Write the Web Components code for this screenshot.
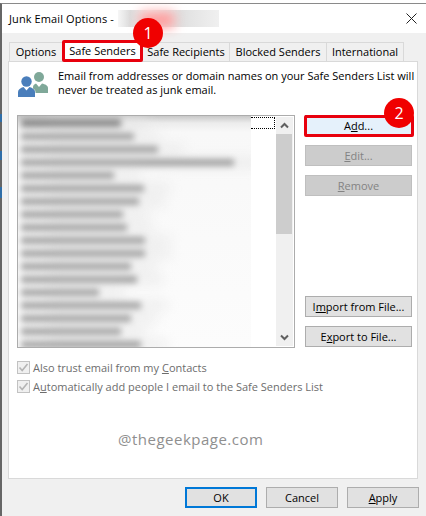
<!DOCTYPE html>
<html>
<head>
<meta charset="utf-8">
<style>
  html, body { margin: 0; padding: 0; background: #fff; }
  body { font: 11px "Open Sans", sans-serif; color: #000; }
</style>
</head>
<body>
<junk-dialog>
  <tab-strip slot="tabs"></tab-strip>
  <sender-list slot="list"></sender-list>
  <dlg-btn slot="side" class="add" key="d">Add...</dlg-btn>
  <dlg-btn slot="side" disabled key="E">Edit...</dlg-btn>
  <dlg-btn slot="side" disabled key="R">Remove</dlg-btn>
  <dlg-btn slot="side" class="imp" key="m">Import from File...</dlg-btn>
  <dlg-btn slot="side" key="x">Export to File...</dlg-btn>
  <check-row slot="checks" key="C">Also trust email from my Contacts</check-row>
  <check-row slot="checks" key="u">Automatically add people I email to the Safe Senders List</check-row>
  <dlg-btn slot="footer" primary>OK</dlg-btn>
  <dlg-btn slot="footer">Cancel</dlg-btn>
  <dlg-btn slot="footer" key="A">Apply</dlg-btn>
</junk-dialog>

<script>
// underline the access key of a label, the way the dialog does
function markKey(text, key) {
  if (!key) return text;
  const i = text.indexOf(key);
  if (i < 0) return text;
  return text.slice(0, i) + '<u>' + key + '</u>' + text.slice(i + 1);
}

class DlgBtn extends HTMLElement {
  connectedCallback() {
    const root = this.attachShadow({ mode: 'open' });
    root.innerHTML = `
      <style>
        :host {
          display: block;
          box-sizing: border-box;
          height: 21px;
          border: 1px solid #adadad;
          background: #e1e1e1;
          font: 11px/19px "Open Sans", sans-serif;
          text-align: center;
          color: #000;
          white-space: nowrap;
        }
        :host([disabled]) { background: #cccccc; border-color: #bfbfbf; color: #838383; }
        :host([primary]) { border: 2px solid #0078d7; line-height: 17px; }
        :host(.add) { background: #e5f1fb; border-color: #0078d7; }
      </style>
      <span>${markKey(this.textContent, this.getAttribute('key'))}</span>`;
  }
}

class CheckRow extends HTMLElement {
  connectedCallback() {
    const root = this.attachShadow({ mode: 'open' });
    root.innerHTML = `
      <style>
        :host {
          display: flex;
          align-items: center;
          gap: 3px;
          height: 19px;
          font: 11px "Open Sans", sans-serif;
          color: #6d6d6d;
          white-space: nowrap;
        }
        svg { flex: none; }
      </style>
      <svg width="13" height="13" viewBox="0 0 13 13">
        <rect x=".5" y=".5" width="12" height="12" fill="#f0f0f0" stroke="#c2c2c2"/>
        <path d="M2.5 6.5 5.2 9.5 10.5 3" fill="none" stroke="#b4b4b4" stroke-width="1.6"/>
      </svg>
      <span>${markKey(this.textContent, this.getAttribute('key'))}</span>`;
  }
}

class TabStrip extends HTMLElement {
  connectedCallback() {
    const tabs = ['Options', 'Safe Senders', 'Safe Recipients', 'Blocked Senders', 'International'];
    const widths = [54, 81, 88, 98, 78];
    const root = this.attachShadow({ mode: 'open' });
    root.innerHTML = `
      <style>
        :host {
          display: flex;
          align-items: flex-end;
          height: 19px;
          padding-left: 2px;
          position: relative;
          z-index: 1;
          font: 11px "Open Sans", sans-serif;
        }
        .tab {
          box-sizing: border-box;
          height: 19px;
          border: 1px solid #d9d9d9;
          border-bottom: 0;
          margin-left: -1px;
          background: #f0f0f0;
          line-height: 18px;
          text-align: center;
          white-space: nowrap;
        }
        .tab.on {
          height: 22px;
          line-height: 15px;
          background: #fff;
          border: 3px solid #e8000d;
          border-radius: 2px;
          margin-bottom: -1px;
          position: relative;
          z-index: 1;
        }
      </style>
      ${tabs.map((t, i) => `<div class="tab${i === 1 ? ' on' : ''}" style="width:${widths[i]}px">${t}</div>`).join('')}`;
  }
}

class SenderList extends HTMLElement {
  connectedCallback() {
    // widths of the blurred addresses, top to bottom
    const rows = [100, 113, 137, 213, 93, 123, 118, 102, 106, 124, 124, 110, 116, 78, 120, 110, 100, 120];
    const root = this.attachShadow({ mode: 'open' });
    root.innerHTML = `
      <style>
        :host {
          display: flex;
          box-sizing: border-box;
          height: 233px;
          border: 1px solid #acacac;
          background: #fff;
          overflow: hidden;
        }
        .names {
          flex: none;
          width: 233px;
          overflow: hidden;
          background: linear-gradient(180deg, #c8c8c8 0, #ececec 7px, #f8f8f8 16px, #fcfcfc 100%);
        }
        .blur {
          display: flex;
          flex-direction: column;
          gap: 6px;
          padding: 3px 0 0 3px;
          filter: blur(3px);
        }
        .blur div { height: 7px; background: #a0a0a0; box-shadow: 26px 0 12px #e6e6e6; }
        .blur div:first-child { background: #858585; height: 8px; }
        .rest { flex: 1; position: relative; }
        .focus { margin: 1px 0 0 0; height: 12px; width: 24px; box-sizing: border-box; border: 1px dotted #000; border-left: 0; }
        .scroll {
          flex: none;
          width: 17px;
          background: #f0f0f0;
          margin: 1px 1px 1px 0;
          display: flex;
          flex-direction: column;
          align-items: stretch;
        }
        .arrow { height: 17px; display: flex; align-items: center; justify-content: center; flex: none; }
        .thumb { height: 100px; background: #cdcdcd; margin-right: 1px; flex: none; }
        .track { flex: 1; }
      </style>
      <div class="names"><div class="blur">${rows.map(w => `<div style="width:${w}px"></div>`).join('')}</div></div>
      <div class="rest"><div class="focus"></div></div>
      <div class="scroll">
        <div class="arrow"><svg width="9" height="7" viewBox="0 0 9 7"><path d="M1 5.5 4.5 2 8 5.5" fill="none" stroke="#606060" stroke-width="2"/></svg></div>
        <div class="thumb"></div>
        <div class="track"></div>
        <div class="arrow"><svg width="9" height="7" viewBox="0 0 9 7"><path d="M1 1.5 4.5 5 8 1.5" fill="none" stroke="#606060" stroke-width="2"/></svg></div>
      </div>`;
  }
}

class JunkDialog extends HTMLElement {
  connectedCallback() {
    const root = this.attachShadow({ mode: 'open' });
    root.innerHTML = `
      <style>
        :host {
          display: block;
          box-sizing: border-box;
          width: 426px;
          height: 516px;
          padding-top: 3px;
          position: relative;
          overflow: hidden;
          font: 11px "Open Sans", sans-serif;
        }
        .win {
          box-sizing: border-box;
          height: 513px;
          border-top: 1px solid #8a8a8a;
          border-left: 2px solid #666;
          background: #f0f0f0;
          display: flex;
          flex-direction: column;
        }
        .title {
          flex: none;
          height: 29px;
          background: #fff;
          display: flex;
          align-items: center;
          padding: 0 9px 0 7px;
          letter-spacing: .1px;
          white-space: nowrap;
        }
        .smudge {
          width: 101px;
          height: 17px;
          margin-left: 4px;
          background: linear-gradient(90deg, #f6f6f6 0, #dcdcdc 12%, #f2f2f2 30%, #e0e0e0 62%, #f0f0f0 100%);
        }
        .close { margin-left: auto; }
        .main { flex: 1; padding: 9px 8px 0 6px; display: flex; flex-direction: column; }
        .panel {
          box-sizing: border-box;
          height: 418px;
          background: #fff;
          border: 1px solid #d9d9d9;
          display: flex;
          flex-direction: column;
          padding: 8px 5px 0 8px;
        }
        .intro { display: flex; gap: 9px; height: 45px; }
        .intro p {
          margin: -1px 0 0;
          line-height: 13.5px;
          white-space: nowrap;
        }
        .work { display: grid; grid-template-columns: 278px 107px; column-gap: 10px; }
        .side { display: flex; flex-direction: column; gap: 9px; }
        .side ::slotted(.imp) { margin-top: 91px; }
        .checks { margin-top: 10px; }
        .footer {
          display: grid;
          grid-template-columns: repeat(3, 72px);
          column-gap: 9px;
          justify-content: end;
          padding-top: 8px;
          margin-right: -1px;
        }
        .mark {
          position: absolute;
          width: 30px;
          height: 30px;
          border-radius: 50%;
          background: #f00000;
          color: #fff;
          font: 16px/30px "Open Sans", sans-serif;
          text-align: center;
          z-index: 3;
        }
        .m1 { left: 133px; top: 18px; }
        .m2 { left: 384px; top: 98px; }
        .glow {
          position: absolute;
          left: 140px; top: 12px;
          width: 34px; height: 16px;
          background: #ff9a9a;
          filter: blur(6px);
          z-index: 2;
        }
        .ring {
          position: absolute;
          left: 304px; top: 115px;
          width: 110px; height: 22px;
          box-sizing: border-box;
          border: 3px solid #e8000d;
          border-radius: 2px;
          z-index: 2;
        }
        .watermark {
          position: absolute;
          left: 118px; top: 429px;
          font: 15px "Open Sans", sans-serif;
          letter-spacing: .5px;
          color: #8f8f8f;
          z-index: 2;
        }
        /* bits of the window behind, showing along the left edge */
        .edge {
          position: absolute;
          left: 0; top: 114px;
          width: 2px; height: 84px;
          background: linear-gradient(180deg,
            #2f6ea8 0 8px, transparent 8px 37px,
            #2f6ea8 37px 46px, transparent 46px 73px,
            #2f6ea8 73px 84px);
        }
      </style>
      <div class="win">
        <div class="title">
          <span>Junk Email Options -</span><div class="smudge"></div>
          <svg class="close" width="11" height="11" viewBox="0 0 11 11"><path d="M.5.5l10 10M10.5.5l-10 10" stroke="#222" stroke-width="1" fill="none"/></svg>
        </div>
        <div class="main">
          <slot name="tabs"></slot>
          <div class="panel">
            <div class="intro">
              <svg width="32" height="27" viewBox="0 0 32 27" style="flex:none">
                <circle cx="22" cy="7" r="5" fill="#7fa899"/>
                <path d="M16 23v-6c0-1.5 1-2.5 3-3.5l3 3.5 3-3.5c3 .8 6 2 6 4.5v5z" fill="#7fa899"/>
                <circle cx="9.5" cy="11.5" r="5.2" fill="#4a7ebb" stroke="#fff" stroke-width="1" paint-order="stroke"/>
                <path d="M1 27v-5c0-2.5 2.5-4 5.5-5l3 3.5 3-3.5c3 1 5.5 2.5 5.5 5v5z" fill="#4a7ebb" stroke="#fff" stroke-width="1" paint-order="stroke"/>
              </svg>
              <p>Email from addresses or domain names on your Safe Senders List will<br>never be treated as junk email.</p>
            </div>
            <div class="work">
              <slot name="list"></slot>
              <div class="side"><slot name="side"></slot></div>
            </div>
            <div class="checks"><slot name="checks"></slot></div>
          </div>
          <div class="footer"><slot name="footer"></slot></div>
        </div>
      </div>
      <div class="edge"></div>
      <div class="glow"></div>
      <div class="mark m1">1</div>
      <div class="ring"></div>
      <div class="mark m2">2</div>
      <div class="watermark">@thegeekpage.com</div>`;
  }
}

customElements.define('dlg-btn', DlgBtn);
customElements.define('check-row', CheckRow);
customElements.define('tab-strip', TabStrip);
customElements.define('sender-list', SenderList);
customElements.define('junk-dialog', JunkDialog);
</script>
</body>
</html>
